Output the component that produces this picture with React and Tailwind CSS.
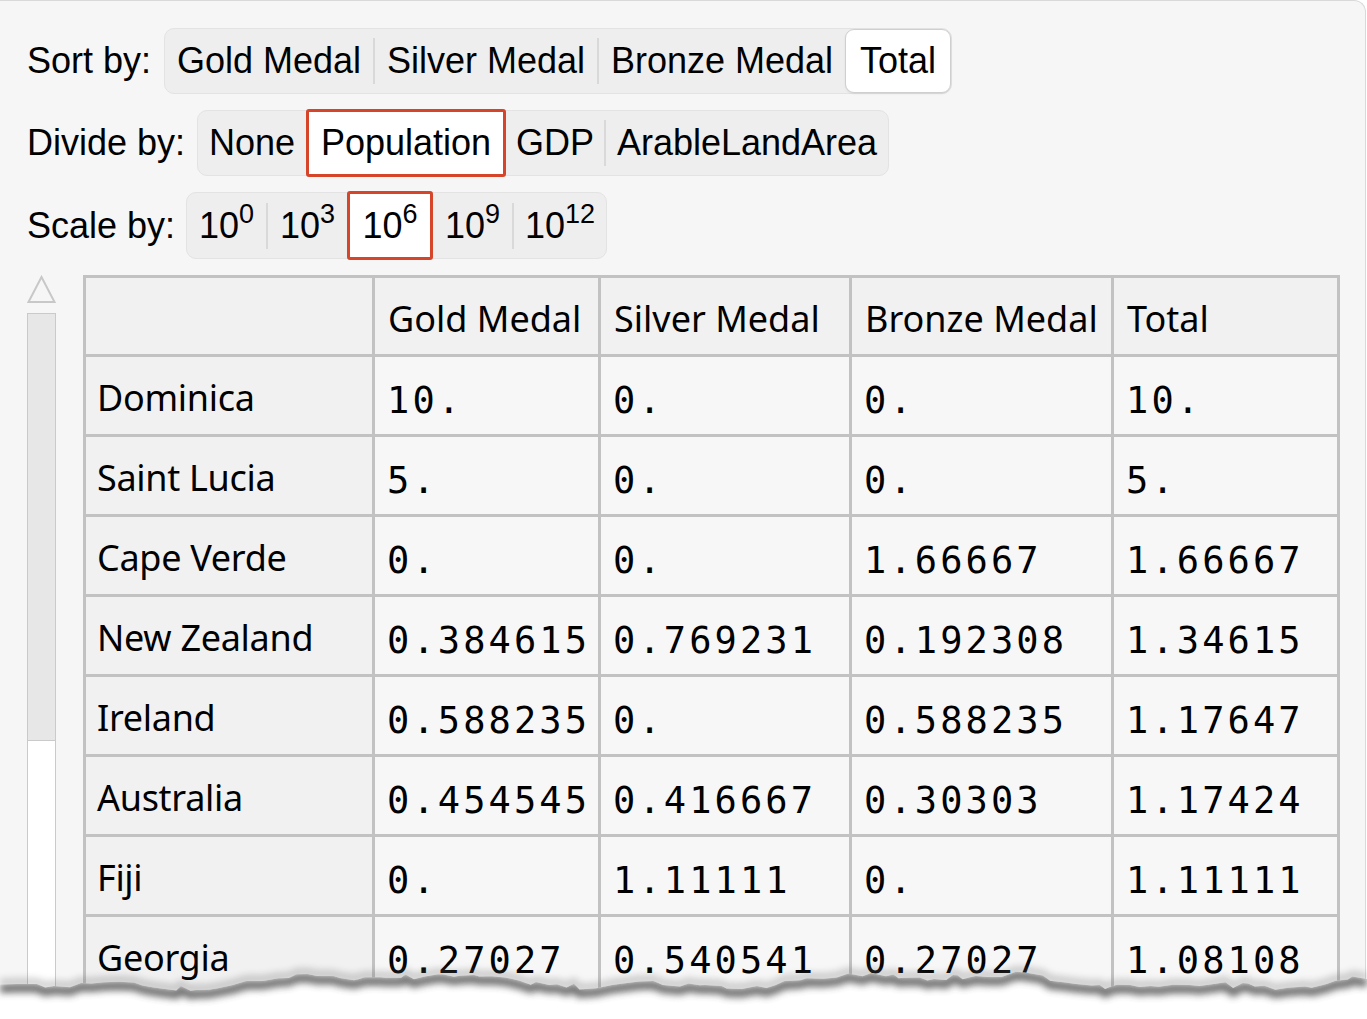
import React from "react";

const sortOptions = [
  { label: "Gold Medal", w: "w-[208px]" },
  { label: "Silver Medal", w: "w-[222px]", sep: true },
  { label: "Bronze Medal", w: "w-[246px]", sep: true },
  { label: "Total", w: "w-[106px]", selected: true },
];

const divideOptions = [
  { label: "None", w: "w-[108px]" },
  { label: "Population", w: "w-[200px]", selected: true, marked: true },
  { label: "GDP", w: "w-[98px]" },
  { label: "ArableLandArea", w: "w-[282px]", sep: true },
];

const scaleOptions = [
  { label: "10", exp: "0", w: "w-[79px]" },
  { label: "10", exp: "3", w: "w-[79px]", sep: true },
  { label: "10", exp: "6", w: "w-[86px]", selected: true, marked: true },
  { label: "10", exp: "9", w: "w-[79px]" },
  { label: "10", exp: "12", w: "w-[92px]", sep: true },
];

const headers = ["", "Gold Medal", "Silver Medal", "Bronze Medal", "Total"];

const rows = [
  ["Dominica", "10.", "0.", "0.", "10."],
  ["Saint Lucia", "5.", "0.", "0.", "5."],
  ["Cape Verde", "0.", "0.", "1.66667", "1.66667"],
  ["New Zealand", "0.384615", "0.769231", "0.192308", "1.34615"],
  ["Ireland", "0.588235", "0.", "0.588235", "1.17647"],
  ["Australia", "0.454545", "0.416667", "0.30303", "1.17424"],
  ["Fiji", "0.", "1.11111", "0.", "1.11111"],
  ["Georgia", "0.27027", "0.540541", "0.27027", "1.08108"],
];

// torn bottom edge of the screenshot
const edgePoints = (() => {
  let s = 11;
  const rnd = () => {
    s = (s * 9301 + 49297) % 233280;
    return s / 233280;
  };
  const pts = [];
  let x = 0;
  while (x < 1367) {
    const y = 33 + 6 * Math.sin(x / 85) + 3 * Math.sin(x / 29 + 1) + rnd() * 6;
    pts.push([x, y]);
    x += 4 + rnd() * 14;
  }
  pts.push([1367, 34]);
  return pts;
})();

const edgeLine = edgePoints.map((p, i) => `${i ? "L" : "M"}${p[0].toFixed(1)},${p[1].toFixed(1)}`).join(" ");
const edgeBelow = `${edgeLine} L1367,80 L0,80 Z`;
const edgeAbove = `${edgeLine} L1367,0 L0,0 Z`;

const Segmented = ({ options, h }) => (
  <div className={`flex items-center bg-[#eeeeee] border border-[#e3e3e3] rounded-[10px] ${h}`}>
    {options.map((o, i) => (
      <React.Fragment key={i}>
        {o.sep && <span className="w-[2px] h-[46px] bg-[#d9d9d9] shrink-0" />}
        <div
          className={`${o.w} shrink-0 flex items-center justify-center ${
            o.marked
              ? "self-stretch -my-[2px] bg-white border-[3px] border-[#d6442a] rounded-[3px]"
              : o.selected
              ? "self-stretch bg-white border border-[#cfcfcf] rounded-[9px] shadow-[0_1px_2px_rgba(0,0,0,0.08)]"
              : ""
          }`}
        >
          <span className="leading-none">
            {o.label}
            {o.exp && <sup className="text-[27px] top-[-15px]">{o.exp}</sup>}
          </span>
        </div>
      </React.Fragment>
    ))}
  </div>
);

const App = () => {
  return (
    <div className="relative w-[1367px] h-[1019px] overflow-hidden bg-white">
      <div className="w-[1366px] h-[1100px] bg-[#f6f6f6] border-t border-r border-[#d9d9d9] rounded-tr-[12px] pt-[27px] text-black font-['Liberation_Sans',Arial,sans-serif] text-[36px]">
        <div className="flex flex-col gap-[16px] pl-[27px]">
          <div className="flex items-center gap-[13px]">
            <span className="leading-none">Sort by:</span>
            <Segmented options={sortOptions} h="h-[66px]" />
          </div>
          <div className="flex items-center gap-[12px]">
            <span className="leading-none">Divide by:</span>
            <Segmented options={divideOptions} h="h-[66px]" />
          </div>
          <div className="flex items-center gap-[11px]">
            <span className="leading-none">Scale by:</span>
            <Segmented options={scaleOptions} h="h-[67px]" />
          </div>
        </div>

        <div className="flex mt-[16px] pl-[27px] gap-[27px]">
          <div className="w-[29px] shrink-0 flex flex-col">
            <svg width="29" height="29" viewBox="0 0 29 29">
              <path d="M14.5 2 L27.5 27 L1.5 27 Z" fill="none" stroke="#c8c8c8" strokeWidth="2" />
            </svg>
            <div className="mt-[9px] w-[29px] h-[720px] border border-[#cacaca] bg-white flex flex-col">
              <div className="h-[427px] bg-[#e7e7e7] border-b border-[#cacaca]" />
            </div>
          </div>

          <div className="grid grid-cols-[286px_223px_248px_259px_223px] gap-[3px] p-[3px] bg-[#c2c2c2] w-[1257px] self-start font-['Noto_Sans',sans-serif]">
            {headers.map((h, i) => (
              <div key={i} className="h-[76px] bg-[#f1f1f1] flex items-center pl-[13px] pt-[6px] text-[36px] leading-none">
                {h}
              </div>
            ))}
            {rows.map((r, ri) =>
              r.map((c, ci) =>
                ci === 0 ? (
                  <div key={`${ri}-${ci}`} className="h-[77px] bg-[#f1f1f1] flex items-center pl-[11px] pt-[4px] text-[36px] tracking-[-0.3px] leading-none">
                    {c}
                  </div>
                ) : (
                  <div
                    key={`${ri}-${ci}`}
                    className="h-[77px] bg-[#f7f7f7] flex items-center pl-[12px] pt-[9px] font-['DejaVu_Sans_Mono',monospace] text-[37px] tracking-[3.1px] leading-none"
                  >
                    {c}
                  </div>
                )
              )
            )}
          </div>
        </div>
      </div>

      <svg className="absolute left-0 top-[945px]" width="1367" height="80" viewBox="0 0 1367 80">
        <defs>
          <filter id="blur" x="-5%" y="-300%" width="110%" height="700%">
            <feGaussianBlur stdDeviation="3.5" />
          </filter>
          <clipPath id="below">
            <path d={edgeBelow} />
          </clipPath>
          <clipPath id="above">
            <path d={edgeAbove} />
          </clipPath>
        </defs>
        <path d={edgeBelow} fill="#ffffff" />
        <g clipPath="url(#below)">
          <path d={edgeLine} transform="translate(0,4)" fill="none" stroke="#3c3c3c" strokeWidth="9" opacity="0.75" filter="url(#blur)" />
        </g>
        <g clipPath="url(#above)">
          <path d={edgeLine} transform="translate(0,-2)" fill="none" stroke="#6a6a6a" strokeWidth="7" opacity="0.35" filter="url(#blur)" />
        </g>
      </svg>
    </div>
  );
};

export default App;
